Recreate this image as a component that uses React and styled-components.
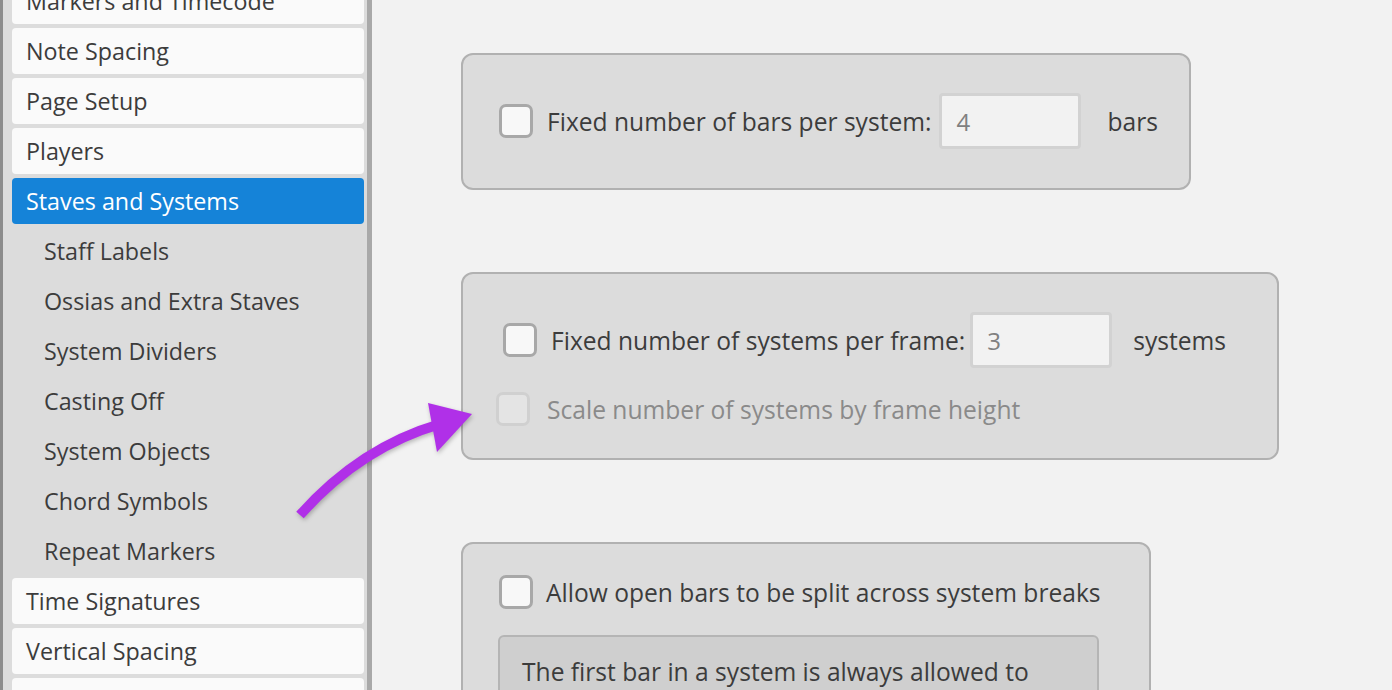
import React from 'react';
import styled, {createGlobalStyle} from 'styled-components';

const GlobalStyle = createGlobalStyle`
  html, body {
    margin: 0;
    padding: 0;
    background: #f2f2f2;
    overflow: hidden;
  }
  body {
    font-family: "Open Sans", Lato, "Liberation Sans", sans-serif;
    color: #3c3c3c;
  }
`

const Page = styled.div`
  position: relative;
  display: flex;
  flex-direction: row;
  width: 1392px;
  height: 690px;
  overflow: hidden;
`

const Sidebar = styled.div`
  width: 364px;
  flex-shrink: 0;
  background: #dcdcdc;
  border-left: 3px solid #8c8c8c;
  border-right: 5px solid #a9a9a9;
  overflow: hidden;
`

const NavList = styled.div`
  display: flex;
  flex-direction: column;
  gap: 4px;
  margin-top: -22px;
  padding: 0 3px 0 9px;
`

const NavItem = styled.div`
  display: flex;
  align-items: center;
  height: 46px;
  flex-shrink: 0;
  padding-left: ${p => (p.$sub ? 32 : 14)}px;
  border-radius: 4px;
  font-size: 23.3px;
  background: ${p => (p.$active ? '#1583d8' : p.$sub ? 'transparent' : '#fafafa')};
  color: ${p => (p.$active ? '#ffffff' : '#3c3c3c')};
`

const Main = styled.div`
  display: flex;
  flex-direction: column;
  align-items: flex-start;
  gap: 82px;
  padding: 53px 0 0 89px;
`

const Panel = styled.div`
  box-sizing: border-box;
  width: ${p => p.$width}px;
  flex-shrink: 0;
  display: flex;
  flex-direction: column;
  gap: ${p => p.$gap || 0}px;
  padding: ${p => p.$pad};
  background: #dcdcdc;
  border: 2px solid #b1b1b1;
  border-radius: 12px;
`

const Row = styled.div`
  display: flex;
  align-items: center;
  height: ${p => p.$height || 34}px;
  padding-left: ${p => p.$indent || 0}px;
`

const Box = styled.div`
  box-sizing: border-box;
  width: 34px;
  height: 34px;
  flex-shrink: 0;
  border-radius: 7px;
  border: 3px solid ${p => (p.$disabled ? '#d0d0d0' : '#a8a8a8')};
  background: ${p => (p.$disabled ? '#e4e4e4' : '#f8f8f8')};
  margin-right: ${p => p.$space || 14}px;
`

const Label = styled.span`
  font-size: 24.6px;
  white-space: nowrap;
  color: ${p => (p.$disabled ? '#8a8a8a' : '#3c3c3c')};
`

const NumberField = styled.div`
  box-sizing: border-box;
  display: flex;
  align-items: center;
  width: 142px;
  height: 56px;
  margin-left: ${p => p.$space || 8}px;
  padding-left: 14px;
  background: #f2f2f2;
  border: 3px solid #d2d2d2;
  border-radius: 4px;
  font-size: 24px;
  color: #808080;
`

const Unit = styled.span`
  font-size: 24.6px;
  margin-left: ${p => p.$space || 26}px;
`

const Note = styled.div`
  box-sizing: border-box;
  width: 601px;
  margin-left: 35px;
  padding: 18px 50px 18px 22px;
  background: #cfcfcf;
  border: 2px solid #b5b5b5;
  border-radius: 6px;
  font-size: 24.6px;
  line-height: 34px;
`

const Arrow = styled.svg`
  position: absolute;
  left: 0;
  top: 0;
  pointer-events: none;
  filter: drop-shadow(1px 2px 2px rgba(0, 0, 0, 0.25));
`

const navItems = [
  {label: 'Markers and Timecode'},
  {label: 'Note Spacing'},
  {label: 'Page Setup'},
  {label: 'Players'},
  {label: 'Staves and Systems', active: true},
  {label: 'Staff Labels', sub: true},
  {label: 'Ossias and Extra Staves', sub: true},
  {label: 'System Dividers', sub: true},
  {label: 'Casting Off', sub: true},
  {label: 'System Objects', sub: true},
  {label: 'Chord Symbols', sub: true},
  {label: 'Repeat Markers', sub: true},
  {label: 'Time Signatures'},
  {label: 'Vertical Spacing'},
  {label: 'Voices'},
]

const App = () => {
  return (
    <Page>
      <GlobalStyle />
      <Sidebar>
        <NavList>
          {navItems.map(({label, active, sub}) => (
            <NavItem key={label} $active={active} $sub={sub}>{label}</NavItem>
          ))}
        </NavList>
      </Sidebar>
      <Main>
        <Panel $width={730} $pad="38px 20px 39px 36px">
          <Row $height={56}>
            <Box />
            <Label>Fixed number of bars per system:</Label>
            <NumberField>4</NumberField>
            <Unit>bars</Unit>
          </Row>
        </Panel>
        <Panel $width={818} $pad="38px 20px 32px 33px" $gap={24}>
          <Row $height={56} $indent={7}>
            <Box />
            <Label>Fixed number of systems per frame:</Label>
            <NumberField $space={5}>3</NumberField>
            <Unit $space={21}>systems</Unit>
          </Row>
          <Row>
            <Box $disabled $space={17} />
            <Label $disabled>Scale number of systems by frame height</Label>
          </Row>
        </Panel>
        <Panel $width={690} $pad="31px 20px 20px 0" $gap={26}>
          <Row $indent={36}>
            <Box $space={13} />
            <Label>Allow open bars to be split across system breaks</Label>
          </Row>
          <Note>The first bar in a system is always allowed to be split across system breaks.</Note>
        </Panel>
      </Main>
      <Arrow width="1392" height="690" viewBox="0 0 1392 690">
        <path d="M300 515 C 340 470, 385 440, 440 424" fill="none" stroke="#b030e8" strokeWidth="10" />
        <polygon points="428,403 472,414 437,452" fill="#b030e8" />
      </Arrow>
    </Page>
  );
}

export default App;
